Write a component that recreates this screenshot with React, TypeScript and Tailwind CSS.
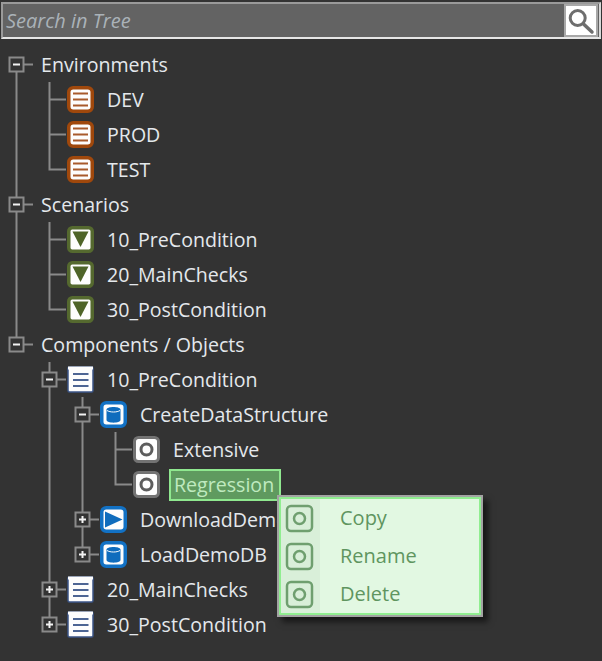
import React from "react"

type IconKind = "list" | "scenario" | "doc" | "db" | "play" | "variant"
type Guide = "none" | "pass" | "end" | "tee" | "minus" | "plus" | "minus-first" | "minus-last" | "plus-last"

interface TreeRow {
    label: string;
    guides: Guide[];
    icon?: IconKind;
    selected?: boolean;
}

const LINE = "#8a8a8a"

// One indent column of the tree: lines and the expander box
function GuideCell({ guide }: { guide: Guide }) {
    const isBox = guide.startsWith("minus") || guide.startsWith("plus")
    const isPlus = guide.startsWith("plus")
    const isLast = guide === "plus-last" || guide === "minus-last"
    return (
        <svg width="33" height="35" viewBox="0 0 33 35" className="shrink-0 block">
            {guide === "pass" && <path d="M16.5 0V35" stroke={LINE} strokeWidth="2" />}
            {guide === "tee" && <path d="M16.5 0V35M16.5 17.5H34" stroke={LINE} strokeWidth="2" fill="none" />}
            {guide === "end" && <path d="M16.5 0V17.5H34" stroke={LINE} strokeWidth="2" fill="none" />}
            {isBox && (
                <g fill="none">
                    <path
                        d={guide === "minus-first" ? "M16.5 17.5V35" : isLast ? "M16.5 0V17.5" : "M16.5 0V35"}
                        stroke={LINE}
                        strokeWidth="2"
                    />
                    <rect x="9.5" y="10.5" width="14" height="14" fill="#333333" stroke={LINE} strokeWidth="2" />
                    <path d="M24 17.5H33" stroke={LINE} strokeWidth="2" />
                    <path d={isPlus ? "M13 17.5H20M16.5 14V21" : "M13 17.5H20"} stroke="#f2f2f2" strokeWidth="2" />
                </g>
            )}
        </svg>
    )
}

function TreeIcon({ kind }: { kind: IconKind }) {
    const common = { width: 27, height: 27, viewBox: "0 0 27 27", className: "shrink-0 block" }
    if (kind === "list") {
        return (
            <svg {...common}>
                <rect x="1.75" y="1.75" width="23.5" height="23.5" rx="4.5" fill="#fdfdfd" stroke="#a0480c" strokeWidth="3.5" />
                <path d="M6 7.5H21M6 13.5H21M6 19.5H21" stroke="#a85a2c" strokeWidth="2" />
            </svg>
        )
    }
    if (kind === "scenario") {
        return (
            <svg {...common}>
                <rect x="1.75" y="1.75" width="23.5" height="23.5" rx="3.5" fill="#fdfdfd" stroke="#55692f" strokeWidth="3.5" />
                <path d="M5.5 5.5H21.5L13.5 21Z" fill="#4e6428" />
            </svg>
        )
    }
    if (kind === "doc") {
        return (
            <svg {...common}>
                <rect x="1" y="1" width="25" height="25" rx="1.5" fill="#fdfdfd" stroke="#3c5688" strokeWidth="1.5" />
                <rect x="1" y="0.5" width="25" height="3" fill="#fdfdfd" />
                <path d="M6 8H21.5M6 14H21.5M6 20H21.5" stroke="#4d6594" strokeWidth="2" />
            </svg>
        )
    }
    if (kind === "db") {
        return (
            <svg {...common}>
                <rect x="1.75" y="1.75" width="23.5" height="23.5" rx="4.5" fill="#fdfdfd" stroke="#1271c4" strokeWidth="3.5" />
                <path d="M6.5 8.5C6.5 5 20.5 5 20.5 8.5V19C20.5 22.5 6.5 22.5 6.5 19Z" fill="#0f6cbd" />
                <path d="M7 9.5C10 11.5 17 11.5 20 9.5" stroke="#fdfdfd" strokeWidth="1" fill="none" />
            </svg>
        )
    }
    if (kind === "play") {
        return (
            <svg {...common}>
                <rect x="1.75" y="1.75" width="23.5" height="23.5" rx="4.5" fill="#fdfdfd" stroke="#1271c4" strokeWidth="3.5" />
                <path d="M5 5.5L22.5 13.5L5 21.5Z" fill="#0f6cbd" />
            </svg>
        )
    }
    return (
        <svg {...common}>
            <rect x="1.5" y="1.5" width="24" height="24" rx="4" fill="#fdfdfd" stroke="#737373" strokeWidth="3" />
            <circle cx="13.5" cy="13.5" r="5.5" fill="none" stroke="#5c5c5c" strokeWidth="3" />
        </svg>
    )
}

function MenuIcon() {
    return (
        <svg width="29" height="29" viewBox="0 0 29 29" className="shrink-0 block">
            <rect x="2" y="2" width="25" height="25" rx="4" fill="none" stroke="#6f9f6f" strokeWidth="2.5" />
            <circle cx="14.5" cy="14.5" r="5.5" fill="none" stroke="#6f9f6f" strokeWidth="2.5" />
        </svg>
    )
}

const rows: TreeRow[] = [
    { label: "Environments", guides: ["minus-first"] },
    { label: "DEV", guides: ["pass", "tee"], icon: "list" },
    { label: "PROD", guides: ["pass", "tee"], icon: "list" },
    { label: "TEST", guides: ["pass", "end"], icon: "list" },
    { label: "Scenarios", guides: ["minus"] },
    { label: "10_PreCondition", guides: ["pass", "tee"], icon: "scenario" },
    { label: "20_MainChecks", guides: ["pass", "tee"], icon: "scenario" },
    { label: "30_PostCondition", guides: ["pass", "end"], icon: "scenario" },
    { label: "Components / Objects", guides: ["minus-last"] },
    { label: "10_PreCondition", guides: ["none", "minus"], icon: "doc" },
    { label: "CreateDataStructure", guides: ["none", "pass", "minus"], icon: "db" },
    { label: "Extensive", guides: ["none", "pass", "pass", "tee"], icon: "variant" },
    { label: "Regression", guides: ["none", "pass", "pass", "end"], icon: "variant", selected: true },
    { label: "DownloadDemoData", guides: ["none", "pass", "plus"], icon: "play" },
    { label: "LoadDemoDB", guides: ["none", "pass", "plus-last"], icon: "db" },
    { label: "20_MainChecks", guides: ["none", "plus"], icon: "doc" },
    { label: "30_PostCondition", guides: ["none", "plus-last"], icon: "doc" },
]

export default function App() {
    return (
        <div className="relative w-[602px] h-[661px] overflow-hidden bg-[#333333] font-['Open_Sans','Noto_Sans',sans-serif] text-[19.6px] text-[#e4e8ec]">
            {/* Search box */}
            <div className="mx-px mt-[2px] h-[37px] flex border-2 border-t-[#9a9a9a] border-l-[#9a9a9a] border-r-[#d8d8d8] border-b-[#e6e6e6] bg-[#636363]">
                <div className="flex-1 pl-[3px] flex items-center italic text-[20px] text-[#aab2b8]">Search in Tree</div>
                <div className="w-[34px] mr-px bg-white border-2 border-[#a8a8a8] flex items-center justify-center">
                    <svg width="30" height="29" viewBox="0 0 30 29">
                        <circle cx="11.7" cy="12" r="7.5" fill="none" stroke="#6e6e6e" strokeWidth="3" />
                        <path d="M17.5 18L26 26" stroke="#6e6e6e" strokeWidth="3.5" strokeLinecap="round" />
                    </svg>
                </div>
            </div>

            {/* Tree */}
            <div className="mt-[8px] flex flex-col">
                {rows.map((row, i) => (
                    <div key={i} className="h-[35px] flex items-center">
                        {row.guides.map((g, j) => (
                            <GuideCell key={j} guide={g} />
                        ))}
                        {row.icon && (
                            <div className="ml-px">
                                <TreeIcon kind={row.icon} />
                            </div>
                        )}
                        {row.selected ? (
                            <span className="ml-[9px] h-[32px] w-[112px] pl-[3px] flex items-center whitespace-nowrap border-2 border-[#8fe88f] bg-[#5f9a5f] text-[#bfeabf]">
                                {row.label}
                            </span>
                        ) : (
                            <span className={`whitespace-nowrap ${row.icon ? "ml-[13px]" : "ml-[8px]"}`}>{row.label}</span>
                        )}
                    </div>
                ))}
            </div>

            {/* Context menu */}
            <div className="absolute left-[277px] top-[495px] w-[206px] h-[122px] border-2 border-[#a3a3a3] bg-[#e2f8e2] shadow-[5px_5px_6px_rgba(0,0,0,0.55)]">
                <div className="h-full border-2 border-[#90ee90] flex flex-col justify-center text-[20px] text-[#5f955f]">
                    {["Copy", "Rename", "Delete"].map((item) => (
                        <div key={item} className="h-[38.5px] flex items-center">
                            <div className="w-[39px] h-full pl-[4px] flex items-center bg-[#d9efd9]">
                                <MenuIcon />
                            </div>
                            <span className="ml-[20px]">{item}</span>
                        </div>
                    ))}
                </div>
            </div>
        </div>
    )
}
